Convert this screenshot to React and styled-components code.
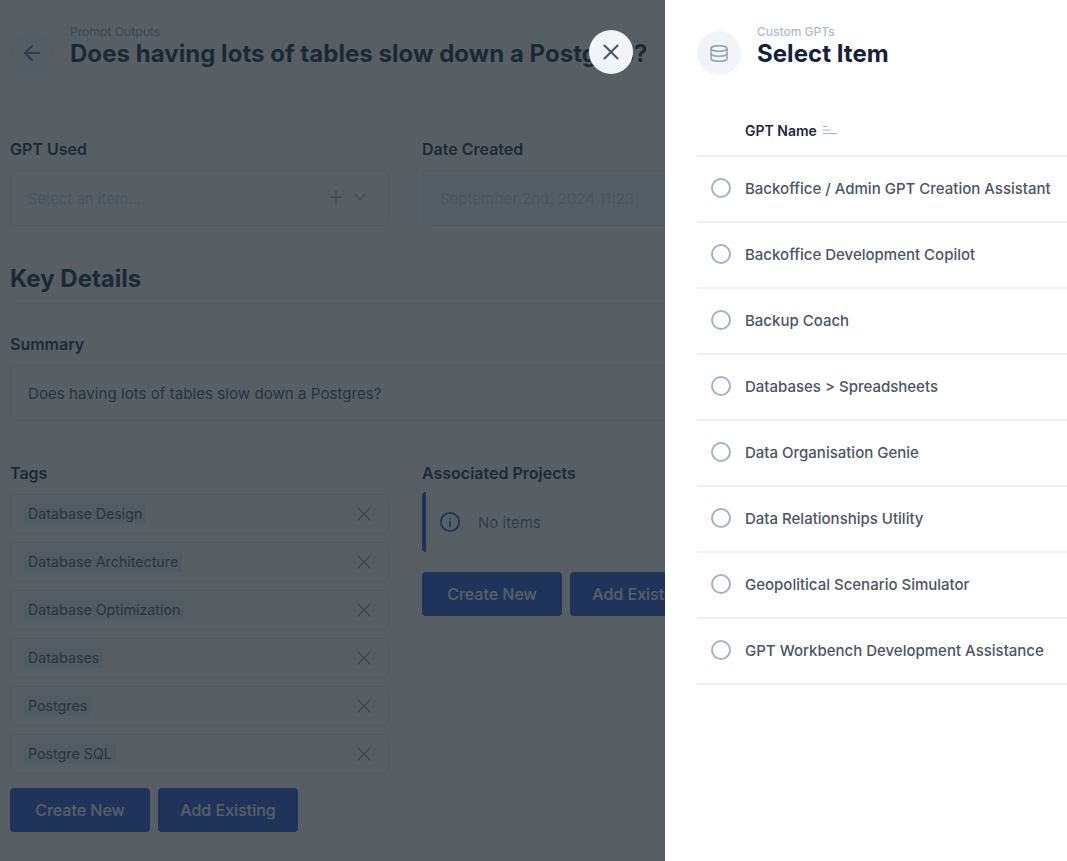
import React from "react";
import styled, { createGlobalStyle } from "styled-components";
import { ArrowLeft, Plus, ChevronDown, X, Info } from "lucide-react";

const GlobalStyle = createGlobalStyle`
  html, body {
    margin: 0;
    padding: 0;
    background: #fff;
    font-family: Inter, "Liberation Sans", sans-serif;
  }
`;

const Page = styled.div`
  position: relative;
  width: 1067px;
  height: 861px;
  overflow: hidden;
  background: #fff;
`;

const Main = styled.main`
  width: 860px;
  padding: 0 0 0 10px;
`;

const Header = styled.header`
  display: flex;
  align-items: center;
  gap: 16px;
  height: 106px;
  white-space: nowrap;
`;

const BackButton = styled.div`
  width: 44px;
  height: 44px;
  border-radius: 50%;
  background: #f1f5f9;
  color: #64748b;
  display: flex;
  align-items: center;
  justify-content: center;
`;

const HeaderText = styled.div`
  margin-top: -4px;
`;

const Eyebrow = styled.div`
  font-size: 12px;
  line-height: 16px;
  font-weight: 500;
  color: ${(props) => props.color || "#a0aec0"};
  margin-top: -10px;
`;

const Title = styled.h1`
  margin: 0;
  font-size: 24px;
  line-height: 28px;
  font-weight: 700;
  letter-spacing: 0.04px;
  color: #0f2a43;
`;

const Columns = styled.div`
  display: grid;
  grid-template-columns: 379px 379px;
  column-gap: 33px;
  align-items: start;
  margin-top: ${(props) => props.top || 0}px;
`;

const Label = styled.div`
  font-size: 16px;
  line-height: 20px;
  font-weight: 600;
  color: #1e293b;
  margin-bottom: 11px;
`;

const Field = styled.div`
  height: 56px;
  box-sizing: border-box;
  border: 1px solid #e8ecf1;
  border-radius: 4px;
  background: ${(props) => props.bg || "#fff"};
  padding: 0 17px;
  display: flex;
  align-items: center;
  font-size: ${(props) => props.size || 15}px;
  color: ${(props) => props.color || "#cbd5e1"};
`;

const FieldIcons = styled.div`
  margin: -2px 1px 0 auto;
  display: flex;
  align-items: center;
  gap: 4px;
  color: #94a3b8;
`;

const SectionTitle = styled.h2`
  margin: 39px 0 0;
  height: 38px;
  border-bottom: 1px solid #eef1f5;
  font-size: 24px;
  line-height: 28px;
  font-weight: 700;
  color: #0f2a43;
`;

const SummaryBlock = styled.div`
  margin-top: 30px;
`;

const TagList = styled.div`
  display: flex;
  flex-direction: column;
  gap: 8px;
`;

const TagRow = styled.div`
  height: 40px;
  box-sizing: border-box;
  border: 1px solid #e8ecf1;
  border-radius: 4px;
  padding: 0 12px 0 17px;
  display: flex;
  align-items: center;
  justify-content: space-between;
  color: #94a3b8;
`;

const Tag = styled.span`
  font-size: 14.25px;
  line-height: 20px;
  color: #475569;
  background: #e8edf3;
  margin-left: -4px;
  padding: 0 4px;
  border-radius: 3px;
`;

const Buttons = styled.div`
  display: flex;
  gap: 8px;
  margin-top: ${(props) => props.top}px;
`;

const Button = styled.div`
  width: 140px;
  height: 44px;
  border-radius: 4px;
  background: #2452d8;
  color: #fff;
  font-size: 16px;
  font-weight: 500;
  display: flex;
  align-items: center;
  justify-content: center;
  white-space: nowrap;
`;

const Notice = styled.div`
  height: 60px;
  margin-top: -2px;
  box-sizing: border-box;
  border-left: 4px solid #2452d8;
  border-radius: 4px;
  padding-left: 13px;
  display: flex;
  align-items: center;
  gap: 17px;
  font-size: 15px;
  color: #64748b;
`;

const NoticeIcon = styled.span`
  display: flex;
  color: #2452d8;
`;

const Overlay = styled.div`
  position: absolute;
  inset: 0;
  background: rgba(31, 41, 50, 0.75);
`;

const Panel = styled.aside`
  position: absolute;
  top: 0;
  bottom: 0;
  left: 665px;
  right: 0;
  background: #fff;
  padding-left: 32px;
  overflow: hidden;
`;

const CloseButton = styled.div`
  position: absolute;
  left: 589px;
  top: 30px;
  width: 44px;
  height: 44px;
  border-radius: 50%;
  background: #f1f5f9;
  color: #475569;
  display: flex;
  align-items: center;
  justify-content: center;
`;

const PanelHeader = styled.div`
  display: flex;
  align-items: center;
  gap: 16px;
  height: 106px;
`;

const PanelIcon = styled.div`
  width: 44px;
  height: 44px;
  border-radius: 50%;
  background: #f1f5f9;
  display: flex;
  align-items: center;
  justify-content: center;
`;

const PanelTitle = styled(Title)`
  color: #14213d;
`;

const TableHead = styled.div`
  height: 51px;
  box-sizing: border-box;
  border-bottom: 2px solid #edf0f4;
  padding: 0 0 1px 48px;
  display: flex;
  align-items: center;
  gap: 6px;
  font-size: 14px;
  font-weight: 600;
  color: #1e293b;
`;

const Row = styled.div`
  height: 66px;
  box-sizing: border-box;
  border-bottom: 2px solid #edf0f4;
  display: flex;
  align-items: center;
  gap: 14px;
  padding: 0 0 2px 14px;
  font-size: 15px;
  font-weight: 500;
  color: #4b5563;
  white-space: nowrap;
`;

const Radio = styled.span`
  width: 20px;
  height: 20px;
  box-sizing: border-box;
  border: 2px solid #a3b1c6;
  border-radius: 50%;
  flex: none;
`;

const SortIcon = () => (
  <svg width="14" height="10" viewBox="0 0 14 10" fill="none" stroke="#a3b1c6" strokeWidth="1">
    <path d="M0 1.5h4M0 5h8M0 8.5h14" />
  </svg>
);

const DatabaseIcon = () => (
  <svg width="18" height="17" viewBox="0 0 18 17" fill="none" stroke="#94a3b8" strokeWidth="1.5">
    <path d="M1 3.5a8 2.8 0 1 0 16 0a8 2.8 0 1 0-16 0" />
    <path d="M1 3.5v10a8 2.8 0 0 0 16 0v-10" />
    <path d="M1 8.5a8 2.8 0 0 0 16 0" />
  </svg>
);

const tags = [
  "Database Design",
  "Database Architecture",
  "Database Optimization",
  "Databases",
  "Postgres",
  "Postgre SQL",
];

const gpts = [
  "Backoffice / Admin GPT Creation Assistant",
  "Backoffice Development Copilot",
  "Backup Coach",
  "Databases > Spreadsheets",
  "Data Organisation Genie",
  "Data Relationships Utility",
  "Geopolitical Scenario Simulator",
  "GPT Workbench Development Assistance",
];

export default function App() {
  return (
    <Page>
      <GlobalStyle />
      <Main>
        <Header>
          <BackButton>
            <ArrowLeft size={24} />
          </BackButton>
          <HeaderText>
            <Eyebrow>Prompt Outputs</Eyebrow>
            <Title>Does having lots of tables slow down a Postgres?</Title>
          </HeaderText>
        </Header>

        <Columns top={33}>
          <div>
            <Label>GPT Used</Label>
            <Field>
              Select an item...
              <FieldIcons>
                <Plus size={20} strokeWidth={1.5} />
                <ChevronDown size={20} strokeWidth={1.5} />
              </FieldIcons>
            </Field>
          </div>
          <div>
            <Label>Date Created</Label>
            <Field bg="#f8fafc">September 2nd, 2024 11:23</Field>
          </div>
        </Columns>

        <SectionTitle>Key Details</SectionTitle>

        <SummaryBlock>
          <Label>Summary</Label>
          <Field color="#475569" size={15.15}>
            Does having lots of tables slow down a Postgres?
          </Field>
        </SummaryBlock>

        <Columns top={42}>
          <div>
            <Label>Tags</Label>
            <TagList>
              {tags.map((tag) => (
                <TagRow key={tag}>
                  <Tag>{tag}</Tag>
                  <X size={24} strokeWidth={1.5} />
                </TagRow>
              ))}
            </TagList>
            <Buttons top={14}>
              <Button>Create New</Button>
              <Button>Add Existing</Button>
            </Buttons>
          </div>
          <div>
            <Label>Associated Projects</Label>
            <Notice>
              <NoticeIcon>
                <Info size={22} />
              </NoticeIcon>
              No items
            </Notice>
            <Buttons top={20}>
              <Button>Create New</Button>
              <Button>Add Existing</Button>
            </Buttons>
          </div>
        </Columns>
      </Main>

      <Overlay />

      <Panel>
        <PanelHeader>
          <PanelIcon>
            <DatabaseIcon />
          </PanelIcon>
          <HeaderText>
            <Eyebrow color="#b0bccd">Custom GPTs</Eyebrow>
            <PanelTitle>Select Item</PanelTitle>
          </HeaderText>
        </PanelHeader>
        <TableHead>
          GPT Name
          <SortIcon />
        </TableHead>
        {gpts.map((name) => (
          <Row key={name}>
            <Radio />
            {name}
          </Row>
        ))}
      </Panel>

      <CloseButton>
        <X size={26} strokeWidth={1.8} />
      </CloseButton>
    </Page>
  );
}
